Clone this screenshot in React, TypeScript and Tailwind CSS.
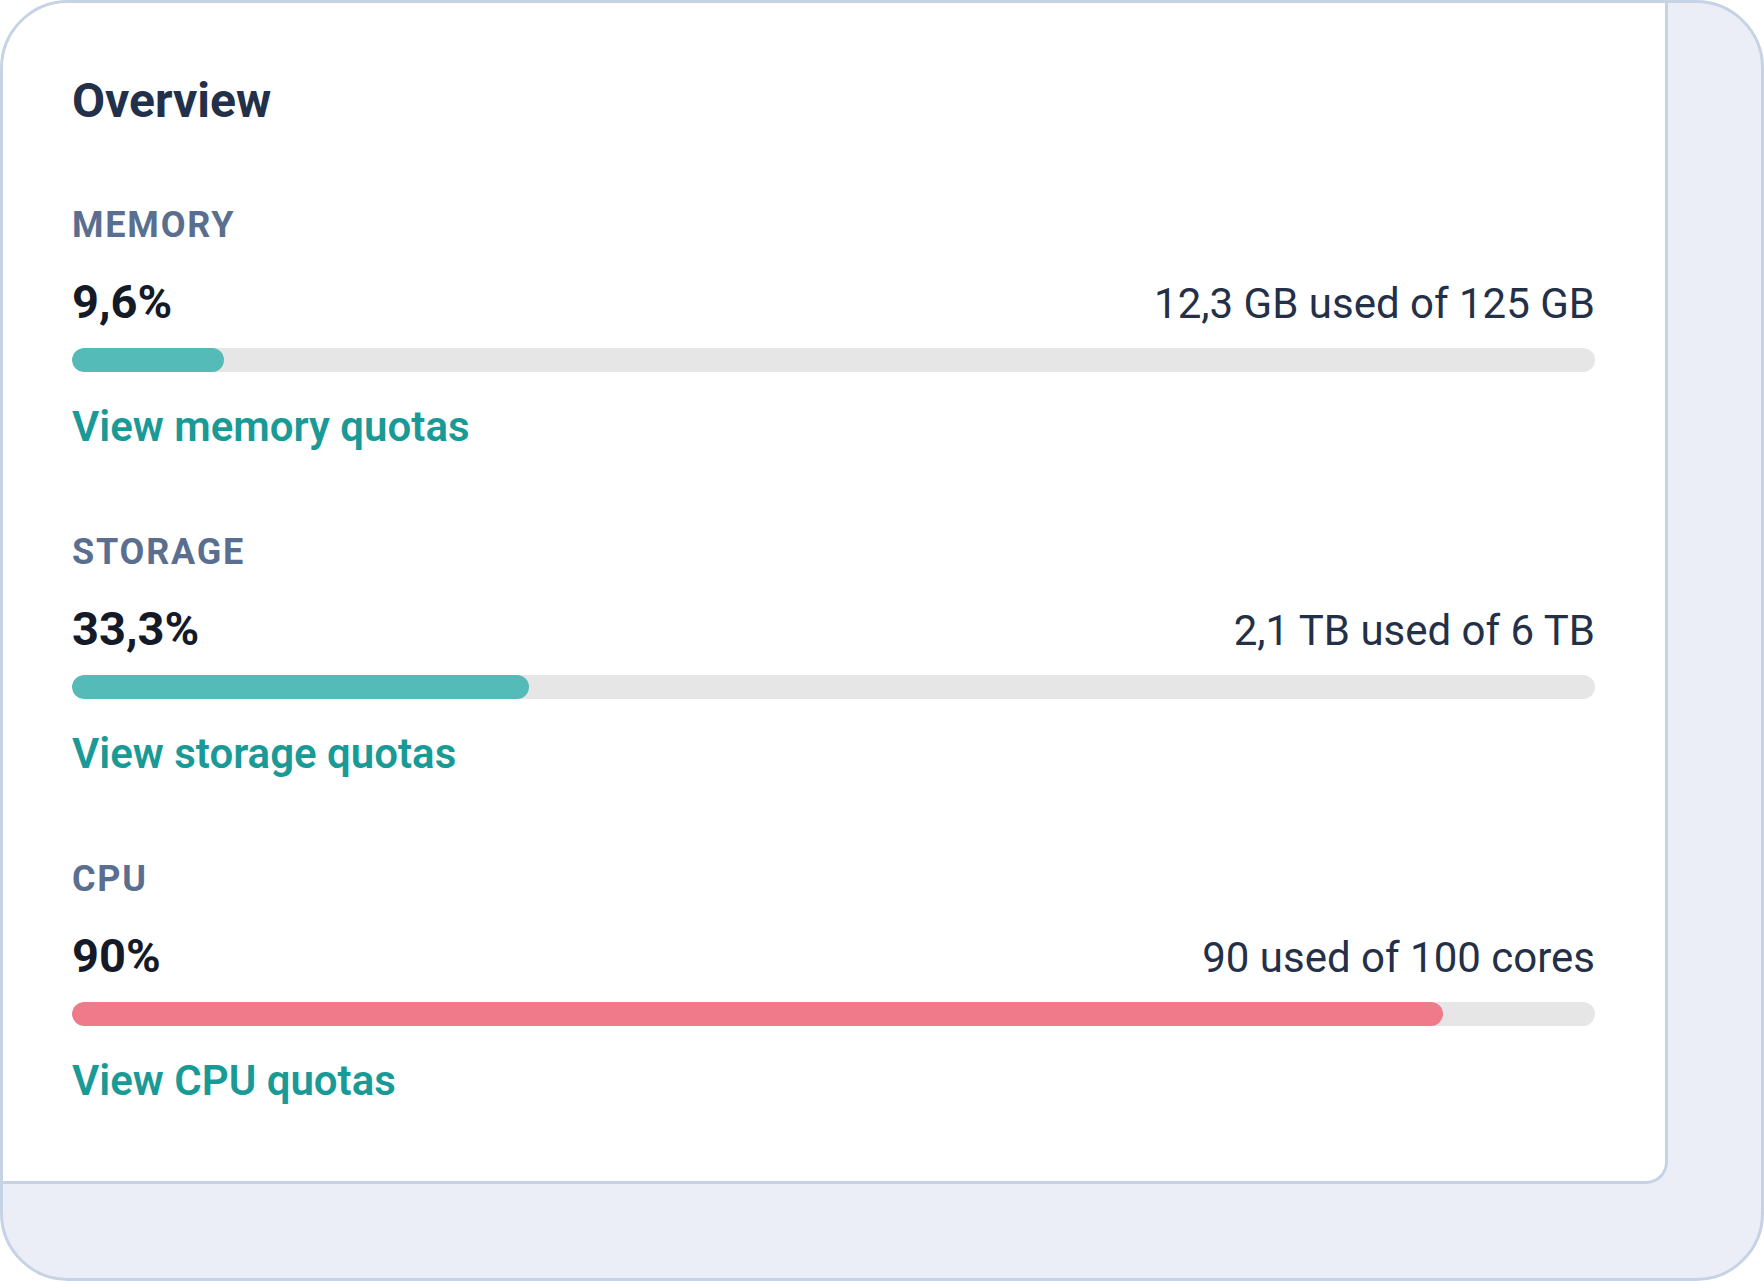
import React from "react";

type Usage = {
  label: string;
  percent: string;
  detail: string;
  link: string;
  fill: string;
};

const usages: Usage[] = [
  {
    label: "MEMORY",
    percent: "9,6%",
    detail: "12,3 GB used of 125 GB",
    link: "View memory quotas",
    fill: "w-[10%] bg-[#55bbb9]",
  },
  {
    label: "STORAGE",
    percent: "33,3%",
    detail: "2,1 TB used of 6 TB",
    link: "View storage quotas",
    fill: "w-[30%] bg-[#55bbb9]",
  },
  {
    label: "CPU",
    percent: "90%",
    detail: "90 used of 100 cores",
    link: "View CPU quotas",
    fill: "w-[90%] bg-[#f07a89]",
  },
];

function UsageBlock({ item }: { item: Usage }) {
  return (
    <div className="flex flex-col">
      <div className="text-[36px] leading-[44px] font-bold tracking-[0.05em] text-[#5a6f8f]">
        {item.label}
      </div>
      <div className="mt-[28px] flex items-baseline justify-between">
        <span className="text-[47px] leading-[54px] font-bold text-[#141a28]">
          {item.percent}
        </span>
        <span className="text-[42px] leading-[54px] text-[#243047]">
          {item.detail}
        </span>
      </div>
      <div className="mt-[17px] h-[24px] w-full rounded-full bg-[#e6e6e6] overflow-hidden">
        <div className={`h-full rounded-full ${item.fill}`} />
      </div>
      <a
        href="#"
        className="mt-[29px] self-start text-[42px] leading-[52px] font-semibold text-[#1a9a96]"
      >
        {item.link}
      </a>
    </div>
  );
}

export default function App() {
  return (
    <div
      className="w-full h-[1281px] rounded-[68px] border-[3px] border-[#c6d3e5] bg-[#ebeef6] overflow-hidden flex flex-col"
      style={{ fontFamily: "Roboto, 'Noto Sans', sans-serif" }}
    >
      <div className="mr-[93px] h-[1181px] bg-white border-r-[3px] border-b-[3px] border-[#c6d3e5] rounded-br-[22px] pt-[70px] pl-[69px] pr-[70px]">
        <h1 className="text-[48px] leading-[56px] font-bold text-[#22304a]">
          Overview
        </h1>
        <div className="mt-[74px] flex flex-col gap-[77px]">
          {usages.map((u) => (
            <UsageBlock key={u.label} item={u} />
          ))}
        </div>
      </div>
    </div>
  );
}
